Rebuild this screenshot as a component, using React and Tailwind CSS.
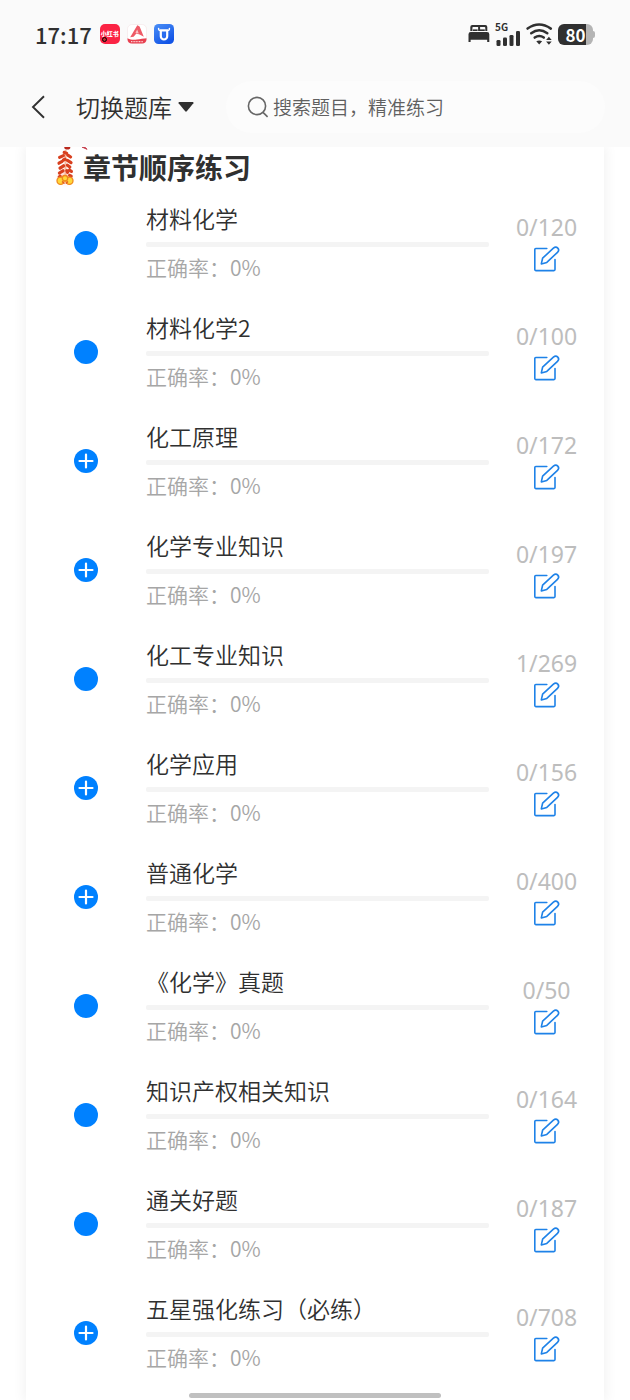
import { useState } from 'react'

const chapters = [
  { id: 1, name: '材料化学', done: 0, total: 120, leaf: true },
  { id: 2, name: '材料化学2', done: 0, total: 100, leaf: true },
  { id: 3, name: '化工原理', done: 0, total: 172 },
  { id: 4, name: '化学专业知识', done: 0, total: 197 },
  { id: 5, name: '化工专业知识', done: 1, total: 269, leaf: true },
  { id: 6, name: '化学应用', done: 0, total: 156 },
  { id: 7, name: '普通化学', done: 0, total: 400 },
  { id: 8, name: '《化学》真题', done: 0, total: 50, leaf: true },
  { id: 9, name: '知识产权相关知识', done: 0, total: 164, leaf: true },
  { id: 10, name: '通关好题', done: 0, total: 187, leaf: true },
  { id: 11, name: '五星强化练习（必练）', done: 0, total: 708 },
]

function AppBadges() {
  return (
    <div className="flex gap-[7px]">
      <div className="relative flex size-5 items-center justify-center rounded-[5px] bg-[#fb2444]">
        <span className="text-[6px] leading-none font-black whitespace-nowrap text-white">小红书</span>
        <span className="absolute bottom-[2px] left-[2px] size-[5px] rounded-full border border-black bg-[#b33]" />
      </div>
      <svg className="size-5" viewBox="0 0 20 20">
        <rect x="0.5" y="0.5" width="19" height="19" rx="4.5" fill="#fff" stroke="#f4e4e5" strokeWidth="0.6" />
        <path d="M10.3 1.2 12.6 2.4 16.8 12.8 12.6 10.6 9.4 9.4 6.6 12.8 3.2 13.2Z" fill="#ee5a66" />
        <path d="M10.2 5.6 8.4 8.8 11.8 9.6Z" fill="#f9c3c7" />
        <path d="M0.5 14.2C4 16 7 15.8 10 15.4S17 14.6 19.5 14.2V15.5A4.5 4.5 0 0 1 15 19.6H5A4.5 4.5 0 0 1 .5 15.5Z" fill="#e8404f" />
        <path d="M4 17.7H16" stroke="#fbd0d4" strokeWidth="1.2" strokeDasharray="1 .6" />
      </svg>
      <svg className="size-5" viewBox="0 0 20 20">
        <defs>
          <linearGradient id="ox" x1="0" y1="0" x2="0.6" y2="1">
            <stop offset="0" stopColor="#4a8ff7" />
            <stop offset="1" stopColor="#1254e6" />
          </linearGradient>
        </defs>
        <rect width="20" height="20" rx="4.5" fill="url(#ox)" />
        <path d="M4.6 4.4Q4.4 6.6 6.6 6.6M15.4 4.4Q15.6 6.6 13.4 6.6" fill="none" stroke="#fff" strokeWidth="1.5" strokeLinecap="round" />
        <path d="M6.8 6.4V12.3A3.2 3.2 0 0 0 13.2 12.3V6.4Z" fill="none" stroke="#fff" strokeWidth="2.2" strokeLinejoin="round" />
        <path d="M8.6 12.6V8.6H11.4V12.6A1.4 1.4 0 0 1 8.6 12.6Z" fill="#2b6ef0" />
      </svg>
    </div>
  )
}

function StatusBar() {
  return (
    <div className="flex h-[68px] items-center justify-between px-[35px] text-[#303030]">
      <div className="flex items-center gap-2">
        <span className="text-[22px] leading-7 font-medium">17:17</span>
        <AppBadges />
      </div>
      <div className="flex items-center gap-[5px]">
        <svg className="h-5 w-[22px]" viewBox="0 0 22 20" fill="#303030">
          <path d="M2.3 7V3A2 2 0 0 1 4.3 1H17.3A2 2 0 0 1 19.3 3V7H17.3V3.8Q17.3 3 16.5 3H12.1V7H10.1V3H5.2Q4.4 3 4.4 3.8V7Z" />
          <rect x="4.8" y="5.4" width="4.8" height="1.6" />
          <rect x="12" y="5.4" width="4.8" height="1.6" />
          <path d="M0.5 10.3A2.3 2.3 0 0 1 2.8 8H19A2.3 2.3 0 0 1 21.3 10.3V18H19.2V15.8H2.6V18H.5Z" />
        </svg>
        <div className="flex flex-col">
          <span className="h-[8px] text-[10px] leading-[8px] font-bold">5G</span>
          <svg className="h-[15px] w-[26px]" viewBox="0 0 26 15" fill="#303030">
            <rect x="1.5" y="9" width="4" height="6" rx="1.3" />
            <rect x="8" y="6.5" width="4" height="8.5" rx="1.3" />
            <rect x="14.5" y="4" width="4" height="11" rx="1.3" />
            <rect x="21" y="0" width="4" height="15" rx="1.3" />
          </svg>
        </div>
        <svg className="h-[22px] w-[27px]" viewBox="0 0 27 22">
          <g fill="none" stroke="#303030" strokeWidth="2.5" strokeLinecap="round">
            <path d="M1.6 5.6Q13 -2.4 24.8 5.6" />
            <path d="M5.2 10.2Q13.2 4.2 21.3 10.2" />
            <path d="M8.7 14.6Q13.3 11.3 17.8 14.6" />
          </g>
          <path d="M10.3 18.2Q13.2 16.6 16.1 18.2L13.2 21.4Z" fill="#303030" />
          <path d="M22.9 13.8 25.7 17.1H20.1ZM22.9 21.8 25.7 18.5H20.1Z" fill="#303030" />
        </svg>
        <div className="flex items-center">
          <div className="flex h-[21px] w-[35px] items-center justify-center rounded-md bg-linear-to-r from-[#303030] from-80% to-[#b4b4b4] to-80%">
            <span className="text-[17px] leading-none font-bold text-white">80</span>
          </div>
          <span className="h-[7px] w-[2px] rounded-r bg-[#b4b4b4]" />
        </div>
      </div>
    </div>
  )
}

function NavBar() {
  const [keyword, setKeyword] = useState('')
  return (
    <div className="flex h-[79px] items-center pr-[25px] pb-[2px] pl-[31px]">
      <button type="button" aria-label="返回" className="w-[45px]">
        <svg className="h-6 w-4" viewBox="0 0 16 24">
          <path d="M13 1.3 2 12 13 22.7" fill="none" stroke="#303030" strokeWidth="1.9" />
        </svg>
      </button>
      <button type="button" className="flex items-center gap-[6px] text-[24px] leading-8 font-[350] whitespace-nowrap text-[#303030]">
        切换题库
        <svg className="h-[10px] w-4" viewBox="0 0 16 10">
          <path d="M1.2 0H14.8Q16 .4 15.4 1.3L8.8 9.3Q8 10 7.2 9.3L.6 1.3Q0 .4 1.2 0Z" fill="#303030" />
        </svg>
      </button>
      <label className="ml-8 flex h-[52px] min-w-0 flex-1 items-center gap-1 rounded-full bg-[#fcfcfc] pl-[21px]">
        <svg className="size-[22px] shrink-0" viewBox="0 0 22 22" fill="none" stroke="#666" strokeWidth="1.6">
          <circle cx="10" cy="10" r="8.6" />
          <path d="M16 16.4 20.6 20.8" />
        </svg>
        <input
          type="text"
          aria-label="搜索题目"
          placeholder="搜索题目，精准练习"
          value={keyword}
          onChange={(e) => setKeyword(e.target.value)}
          className="min-w-0 flex-1 bg-transparent text-[19px] leading-7 font-[350] outline-none placeholder:text-[#606060]"
        />
      </label>
    </div>
  )
}

function Firecracker() {
  return (
    <svg className="h-[41px] w-[33px] shrink-0" viewBox="0 0 33 41">
      <defs>
        <radialGradient id="glow">
          <stop offset="0" stopColor="#ffb8a8" />
          <stop offset="1" stopColor="#fff" stopOpacity="0" />
        </radialGradient>
      </defs>
      <ellipse cx="10" cy="30" rx="11" ry="12" fill="url(#glow)" />
      <path d="M10.5 3V30" stroke="#f7b79c" strokeWidth="2" />
      <ellipse cx="12.3" cy="0.6" rx="3" ry="2" fill="#b9281c" />
      <path d="M27 0 32 2.3 30 .2Z" fill="#c43b4a" stroke="#c43b4a" />
      {/* crackers hang in two strands */}
      <g stroke="#d8401f" strokeWidth="3.2" strokeLinecap="round">
        <path d="M9.2 5.4 11.6 6.2M4.6 10.4 8.4 8.6M12.8 8.2 15.6 10" />
        <path d="M8.4 13 10 12.2M4 16.2 7.2 14.4M12.4 13.4 16 15.6" />
        <path d="M5 21.2 8.6 18.8M12.4 18.2 14.8 20M14.4 23.2 16.4 24.4" />
        <path d="M4.4 26 8 23.8M11.8 23.6 12.6 25.4M4.2 30 5.2 29.2M14.6 28.4 16.2 29.2" />
      </g>
      <g fill="#ffd83a" stroke="#f08a1c" strokeWidth="1.3">
        <circle cx="5.6" cy="33.8" r="3.6" />
        <circle cx="14.4" cy="33.8" r="3.6" />
        <circle cx="10" cy="31.2" r="2.7" />
      </g>
      <path d="M7 34.5 9.5 36.6M13 34.5 10.8 36.6" stroke="#e2541e" strokeWidth="1.2" />
    </svg>
  )
}

function EditIcon() {
  return (
    <svg className="size-7" viewBox="0 0 28 28" fill="none" stroke="#1e82e8" strokeWidth="1.6" strokeLinejoin="round" strokeLinecap="round">
      <path d="M13.8 3.5H2.8Q1.8 3.5 1.8 4.5V24.6Q1.8 25.6 2.8 25.6H21Q22 25.6 22 24.6V14.6" />
      <path d="M8.3 18.9 9.6 13.2 20.4 3.2Q22.8 1.1 24.8 3.1 26.7 5.2 24.5 7.3L13.8 17.4Z" />
    </svg>
  )
}

function ChapterRow({ chapter }) {
  const { name, done, total, leaf } = chapter
  return (
    <li className="flex h-[109px] items-center">
      <div className="flex w-[120px] shrink-0 justify-center">
        {leaf ? (
          <span className="size-6 rounded-full bg-[#0081ff]" />
        ) : (
          <button type="button" aria-label={`展开 ${name}`}>
            <svg className="size-6" viewBox="0 0 24 24">
              <circle cx="12" cy="12" r="12" fill="#0081ff" />
              <path d="M12 5.5V18.5M5.5 12H18.5" stroke="#fff" strokeWidth="2.2" strokeLinecap="round" />
            </svg>
          </button>
        )}
      </div>
      <div className="flex min-w-0 flex-1 flex-col">
        <h2 className="text-[23px] leading-7 font-[350] whitespace-nowrap text-[#303030]">{name}</h2>
        <div role="progressbar" aria-label={name} aria-valuenow={0} className="mt-[10px] mb-[6px] h-[5px] rounded-xs bg-[#f4f4f4]" />
        <p className="text-[21px] leading-7 font-[350] text-[#a6a6a6]">正确率：0%</p>
      </div>
      <div className="flex w-[115px] shrink-0 flex-col items-center gap-1">
        <span className="font-['Noto_Sans',sans-serif] text-[23px] leading-7 text-[#bdbdbd]">{done}/{total}</span>
        <button type="button" aria-label={`练习 ${name}`}>
          <EditIcon />
        </button>
      </div>
    </li>
  )
}

export default function App() {
  return (
    <div className="flex min-h-screen flex-col overflow-hidden bg-white font-['Noto_Sans_CJK_SC',sans-serif]">
      <header className="z-10 bg-[#fafafa]">
        <StatusBar />
        <NavBar />
      </header>

      <main className="mx-[26px] flex-1 bg-white shadow-[0_0_12px_2px_#f2f2f2]">
        <div className="flex h-[41px] items-start pl-[29px]">
          <Firecracker />
          <h1 className="-ml-[5px] text-[28px] leading-10 font-bold text-[#303030]">章节顺序练习</h1>
        </div>
        <ul>
          {chapters.map((c) => (
            <ChapterRow key={c.id} chapter={c} />
          ))}
        </ul>
      </main>

      {/* gesture bar */}
      <div className="fixed inset-x-0 bottom-[2px] flex justify-center">
        <span className="h-[5px] w-2/5 rounded-full bg-[#c0c0c0]" />
      </div>
    </div>
  )
}
